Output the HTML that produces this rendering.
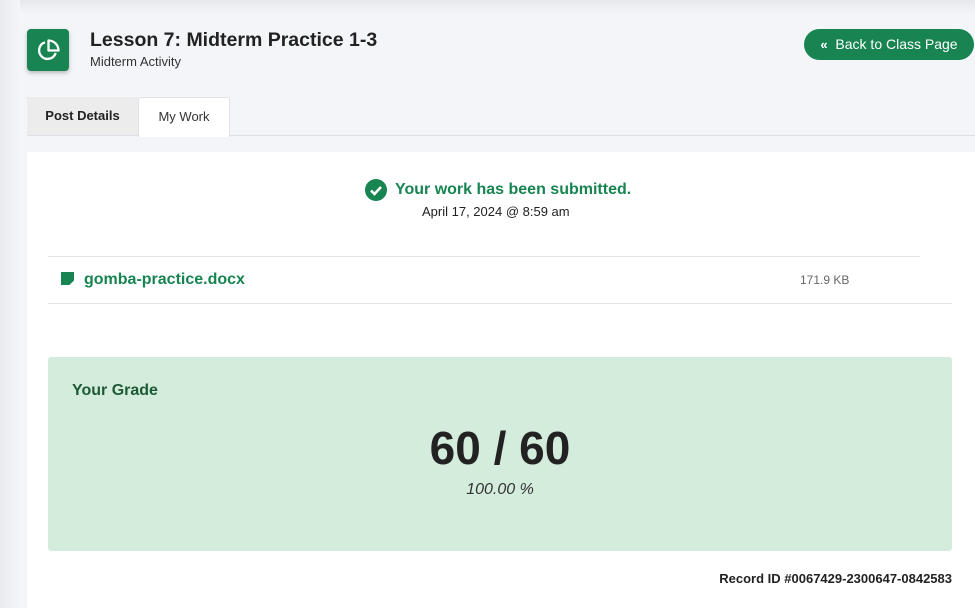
<!DOCTYPE html>
<html><head><style>
body{margin:0;width:975px;height:608px;background:#f4f5f9;font-family:"Liberation Sans",sans-serif;position:relative;overflow:hidden;color:#222}
.a{position:absolute}
</style></head><body>
<div class="a" style="left:0;top:0;width:975px;height:14px;background:linear-gradient(#e6e7eb,#f4f5f9)"></div>
<div class="a" style="left:0;top:0;width:20px;height:608px;background:linear-gradient(90deg,#eaebef,#f4f5f9)"></div>
<div class="a" style="left:27px;top:29px;width:42px;height:42px;background:#178451;border-radius:4px;box-shadow:0 2px 4px rgba(0,0,0,.25)">
<svg width="42" height="42" viewBox="0 0 42 42"><path d="M18 13.3A8.5 8.5 0 1 0 28.7 24" fill="none" stroke="#fff" stroke-width="2.3"/><path d="M21.5 11.5v10h10a10 10 0 0 0-10-10z" fill="none" stroke="#fff" stroke-width="2.3" stroke-linejoin="round"/></svg></div>
<div class="a" style="left:90px;top:29px;font-size:19.5px;font-weight:bold;color:#222">Lesson 7: Midterm Practice 1-3</div>
<div class="a" style="left:90px;top:54px;font-size:13px;color:#333">Midterm Activity</div>
<div class="a" style="left:804px;top:29px;width:170px;height:31px;background:#178451;border-radius:16px;color:#fff;font-size:14px;line-height:31px;text-align:center"><b style="font-size:13px">«</b>&nbsp; Back to Class Page</div>
<div class="a" style="left:27px;top:135px;width:948px;height:1px;background:#dde0e6"></div>
<div class="a" style="left:27px;top:97px;width:111px;height:38px;background:#ececec;font-size:13px;font-weight:bold;line-height:38px;text-align:center">Post Details</div>
<div class="a" style="left:138px;top:97px;width:90px;height:39px;background:#fff;border:1px solid #e0e2e6;border-bottom:none;border-radius:3px 3px 0 0;font-size:13px;line-height:38px;text-align:center;color:#333">My Work</div>
<div class="a" style="left:27px;top:152px;width:948px;height:456px;background:#fff"></div>
<div class="a" style="left:365px;top:179px;width:22px;height:22px;border-radius:50%;background:#178451"><svg width="22" height="22"><path d="M6 11.5l3.5 3.5 6.5-7" fill="none" stroke="#fff" stroke-width="2.6"/></svg></div>
<div class="a" style="left:395px;top:181px;font-size:16px;font-weight:bold;color:#178451">Your work has been submitted.</div>
<div class="a" style="left:422px;top:204px;font-size:13px;color:#222">April 17, 2024 @ 8:59 am</div>
<div class="a" style="left:48px;top:256px;width:872px;height:1px;background:#e4e4e4"></div>
<div class="a" style="left:61px;top:272px;width:13px;height:13px;background:#178451;clip-path:polygon(0 0,100% 0,100% 65%,65% 100%,0 100%)"></div>
<div class="a" style="left:84px;top:271px;font-size:16px;font-weight:bold;color:#178451">gomba-practice.docx</div>
<div class="a" style="left:800px;top:273px;font-size:12px;color:#666">171.9 KB</div>
<div class="a" style="left:48px;top:303px;width:904px;height:1px;background:#e4e4e4"></div>
<div class="a" style="left:48px;top:357px;width:904px;height:194px;background:#d4ecdc;border-radius:3px"></div>
<div class="a" style="left:72px;top:382px;font-size:16px;font-weight:bold;color:#1d5a36">Your Grade</div>
<div class="a" style="left:48px;top:421px;width:904px;text-align:center;font-size:46px;font-weight:bold;color:#222">60 / 60</div>
<div class="a" style="left:48px;top:481px;width:904px;text-align:center;font-size:16px;font-style:italic;color:#333">100.00 %</div>
<div class="a" style="right:23px;top:571px;font-size:13px;font-weight:bold;color:#222">Record ID #0067429-2300647-0842583</div>
</body></html>
